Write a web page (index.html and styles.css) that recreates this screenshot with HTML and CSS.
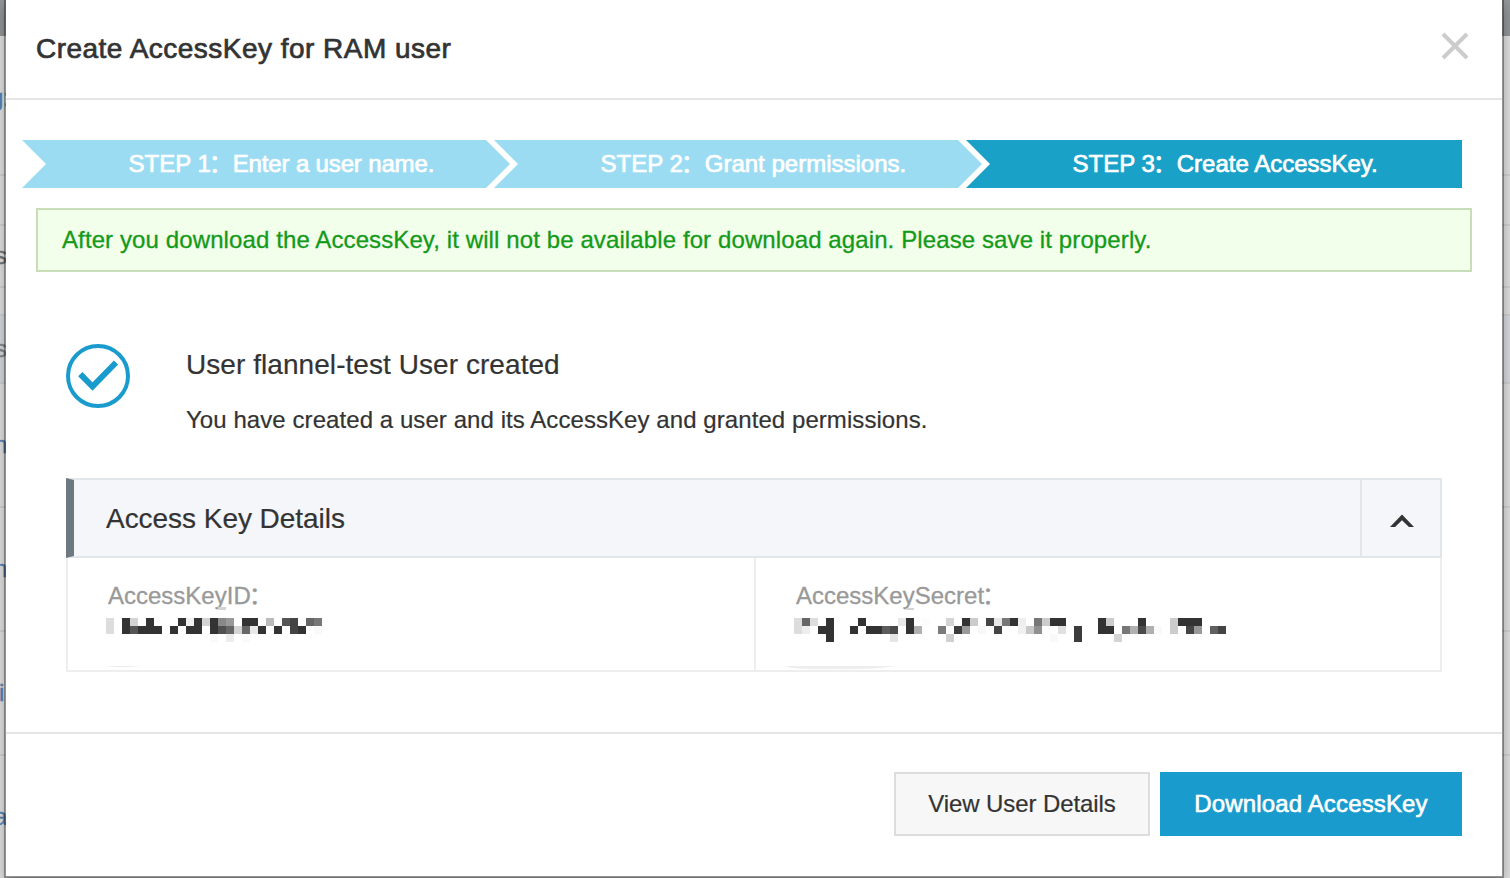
FILE: index.html
```html
<!DOCTYPE html>
<html lang="en">
<head>
<meta charset="utf-8">
<title>Create AccessKey for RAM user</title>
<link rel="stylesheet" href="styles.css">
</head>
<body>
<div class="page" aria-hidden="true">
  <div class="page-nav"></div>
  <div class="page-row row-toolbar"><span class="peek peek-link peek-g">g:</span></div>
  <div class="page-row row-gap"></div>
  <div class="page-row row-head"><span class="peek">s</span></div>
  <div class="page-row row-thin"></div>
  <div class="page-row row-sub"><span class="peek peek-soft">s</span></div>
  <div class="page-row row-item"><span class="peek peek-link">n</span></div>
  <div class="page-row row-item"><span class="peek peek-link">n</span></div>
  <div class="page-row row-item"><span class="peek peek-link peek-i">i</span></div>
  <div class="page-row row-item"><span class="peek peek-link">a</span></div>
</div>

<section class="modal" role="dialog">
  <header class="modal-header">
    <h1 class="modal-title">Create AccessKey for RAM user</h1>
    <svg class="close" viewBox="0 0 28 28"><path d="M2 2L26 26M26 2L2 26"/></svg>
  </header>

  <main class="modal-body">
    <ol class="steps">
      <li class="step"><span>STEP 1</span><span class="colon">：</span><span class="step1-name">Enter a user name.</span></li>
      <li class="step"><span>STEP 2</span><span class="colon">：</span><span>Grant permissions.</span></li>
      <li class="step step-current"><span>STEP 3</span><span class="colon">：</span><span>Create AccessKey.</span></li>
    </ol>
    <div class="notice"><span>After you download the AccessKey, it will not be available for download again. Please save it properly.</span></div>

    <div class="result">
      <svg class="result-icon" viewBox="0 0 64 64"><circle cx="32" cy="32" r="30"/><path d="M14.3 30.2L26.5 42.5L50 18.5"/></svg>
      <div class="result-text">
        <h2 class="result-title">User flannel-test User created</h2>
        <p class="result-desc">You have created a user and its AccessKey and granted permissions.</p>
      </div>
    </div>

    <div class="panel">
      <div class="panel-head">
        <h3 class="panel-title">Access Key Details</h3>
        <div class="panel-toggle"><svg class="chevron" viewBox="0 0 24 14"><path d="M0 13L12 0.5L24 13H19L12 6.3L5 13Z"/></svg></div>
      </div>
      <div class="panel-body">
        <div class="field field-id">
          <div class="field-label"><span>AccessKeyID</span><span class="colon">：</span></div>
          <svg class="mosaic" id="key-id" viewBox="0 -12 560 64"></svg>
        </div>
        <div class="field field-secret">
          <div class="field-label"><span>AccessKeySecret</span><span class="colon">：</span></div>
          <svg class="mosaic" id="key-secret" viewBox="0 -12 560 64"></svg>
        </div>
      </div>
    </div>
  </main>

  <footer class="modal-footer">
    <button class="btn btn-plain">View User Details</button>
    <button class="btn btn-primary">Download AccessKey</button>
  </footer>
</section>
<script src="mosaic.js"></script>
</body>
</html>
```
FILE: styles.css
```css
* { box-sizing: border-box; }
body {
  margin: 0;
  width: 1510px;
  height: 878px;
  overflow: hidden;
  position: relative;
  font-family: "Liberation Sans", "Noto Sans CJK SC", sans-serif;
  font-size: 24px;
  color: #333;
}
h1, h2, h3, p, ol { margin: 0; padding: 0; font-weight: 400; }
svg { display: block; }

/* page visible at the edges of the dialog */
.page { display: flex; flex-direction: column; height: 878px; overflow: hidden; background: #e4e4e4; }
.page-nav { flex: none; height: 36px; background: #94989a; }
.page-row { flex: none; display: flex; align-items: center; border-bottom: 2px solid #d3d5d5; }
.row-toolbar { height: 140px; }
.row-gap { height: 50px; }
.row-head { height: 62px; }
.row-thin { height: 28px; }
.row-sub { height: 68px; background: #dadde2; }
.row-item { height: 124px; }
.peek { width: 8px; overflow: hidden; text-indent: -5px; font-size: 24px; line-height: 30px; color: #777; -webkit-text-stroke: .4px; }
.row-toolbar .peek { margin-bottom: 14px; }
.peek-link { color: #5885b8; text-indent: -6px; }
.peek-g { text-indent: -10px; }
.peek-soft { color: #888c90; }
.peek-i { text-indent: -1px; }

.modal {
  position: absolute;
  left: 4px;
  top: -2px;
  width: 1500px;
  height: 880px;
  display: flex;
  flex-direction: column;
  background: #fff;
  background-clip: padding-box;
  border: 2px solid rgba(0, 0, 0, .35);
  box-shadow: 0 6px 14px rgba(0, 0, 0, .3);
}
.modal-header {
  height: 100px;
  flex: none;
  display: flex;
  justify-content: space-between;
  align-items: flex-start;
  padding: 32px 33px 0 30px;
  border-bottom: 2px solid #e5e5e5;
}
.modal-title { margin-top: 1px; font-size: 28px; line-height: 32px; letter-spacing: .48px; -webkit-text-stroke: .7px #333; }
.close { width: 28px; height: 28px; fill: none; stroke: #ccc; stroke-width: 4; }

.modal-body { flex: 1; padding-top: 40px; }
.steps { display: flex; height: 48px; margin-left: 16px; list-style: none; }
.step {
  display: flex;
  width: 488px;
  margin-right: -16px;
  padding-left: 106.5px;
  line-height: 48px;
  color: #fff;
  background: #9bdcf3;
  -webkit-text-stroke: .7px #fff;
  clip-path: polygon(0 0, 464px 0, 488px 24px, 464px 48px, 0 48px, 24px 24px);
}
.step-current {
  width: 496px;
  margin-right: 0;
  background: #1aa1c7;
  clip-path: polygon(0 0, 100% 0, 100% 100%, 0 100%, 24px 24px);
}
.step1-name { letter-spacing: -.15px; }
.colon { width: 24px; margin: -2px 0 0 -2px; font-family: "Noto Sans CJK SC", sans-serif; }

.notice {
  height: 64px;
  margin: 20px 30px 0;
  padding-left: 24px;
  border: 2px solid #c7deb9;
  background: #f2ffea;
  color: #149a1a;
  line-height: 60px;
  letter-spacing: .107px;
  white-space: nowrap;
  -webkit-text-stroke: .3px #149a1a;
}

.result { display: flex; gap: 56px; margin: 72px 60px 0; }
.result-icon { width: 64px; height: 64px; fill: none; stroke: #1a9bcd; stroke-width: 4; }
.result-icon path { stroke-width: 6; }
.result-title { margin-top: 5px; font-size: 28px; line-height: 32px; letter-spacing: .06px; white-space: nowrap; -webkit-text-stroke: .2px #333; }
.result-desc { margin-top: 25px; line-height: 28px; letter-spacing: .07px; white-space: nowrap; -webkit-text-stroke: .2px #333; }

.panel { width: 1376px; margin: 44px 0 0 60px; }
.panel-head {
  display: flex;
  justify-content: space-between;
  height: 80px;
  background: #f4f6fa;
  border: 2px solid #e0e6ea;
  border-left: 8px solid #6d7881;
}
.panel-title { padding-left: 32px; font-size: 28px; line-height: 77px; letter-spacing: -.04px; -webkit-text-stroke: .2px #333; }
.panel-toggle { width: 80px; padding: 34px 0 0 28px; border-left: 2px solid #e0e6ea; }
.chevron { width: 24px; height: 14px; fill: #333; }
.panel-body { display: grid; grid-template-columns: 688px 1fr; height: 114px; border: 2px solid #eee; border-top: 0; }
.field { padding: 20px 0 0 40px; }
.field-secret { border-left: 2px solid #eee; margin-left: -2px; }
.field-label { display: flex; height: 28px; line-height: 36px; color: #999; -webkit-text-stroke: .3px #999; }
.mosaic { width: 560px; height: 64px; margin-left: -2px; overflow: visible; }

.modal-footer {
  height: 144px;
  flex: none;
  display: flex;
  justify-content: flex-end;
  gap: 10px;
  padding: 38px 40px 0;
  border-top: 2px solid #e5e5e5;
}
.btn { height: 64px; padding: 0; border: 2px solid #ddd; font: 24px/58px "Liberation Sans", sans-serif; }
.btn-plain { width: 256px; background: #f7f7f7; color: #333; letter-spacing: -.1px; -webkit-text-stroke: .2px #333; }
.btn-primary { width: 302px; background: #1a9bcd; border-color: #1a9bcd; color: #fff; letter-spacing: .15px; -webkit-text-stroke: .6px #fff; }
```
FILE: mosaic.js
```javascript
// Masked key values: "column:shade,shade,shade" gives the grey of up to three stacked 8px cells.
const masks = {
  "key-id": "0:dd,dd 2:33,33 3:d4,55 4:,33 5:33,33 6:,33 8:,33 9:33 10:f0,33 11:33,33 12:d4 13:33,33,fa 14:88,50 15:99,66,ec 16:,d4 17:33,66,fa 18:33,e8 19:,33 20:bb 21:,33 22:55 23:44,44 24:,33 25:66 26:77,fa",
  "key-secret": "0:dd,dd 1:66,ee 2:dd 3:,33 4:33,33,33 7:,33 8:33 9:,33 10:,33 11:,5c 12:,4a,e4 13:e8 14:33,33 15:,b0 16:fc 18:,7a 19:d4,,d0 20:,3c 21:33,99 22:cc 23:,f8 24:44 25:e8,44 26:77 27:33 28:ee,f0 29:,c8 30:77,90 31:cc,fc 32:33,,f9 33:33,e0 35:,3c,3c 38:33,33 39:cc,33 40:,,d4 41:,77 42:,b0 43:33,4a 44:,b0 45:,fa 47:cc,cc 48:33 49:33,44 50:33,99 52:,60 53:,44"
};
const NS = "http://www.w3.org/2000/svg";
function add(svg, tag, attrs) {
  const el = document.createElementNS(NS, tag);
  for (const k in attrs) el.setAttribute(k, attrs[k]);
  svg.appendChild(el);
}
for (const id in masks) {
  const svg = document.getElementById(id);
  for (const cell of masks[id].split(" ")) {
    const [col, shades] = cell.split(":");
    shades.split(",").forEach((s, row) => {
      if (s) add(svg, "rect", { x: col * 8, y: row * 8, width: 8, height: 8, fill: "#" + s + s + s });
    });
  }
}
add(document.getElementById("key-id"), "rect", { x: 112, y: -11, width: 8, height: 3, fill: "#d4d4d4" });
add(document.getElementById("key-secret"), "rect", { x: 112, y: -10, width: 8, height: 2, fill: "#d4d4d4" });
add(document.getElementById("key-id"), "path", { d: "M0 49Q16 47 34 49Z", fill: "#e8e8e8" });
add(document.getElementById("key-secret"), "path", { d: "M-9 48H102Q75 52 40 51Q0 52 -9 48Z", fill: "#eee" });
```
